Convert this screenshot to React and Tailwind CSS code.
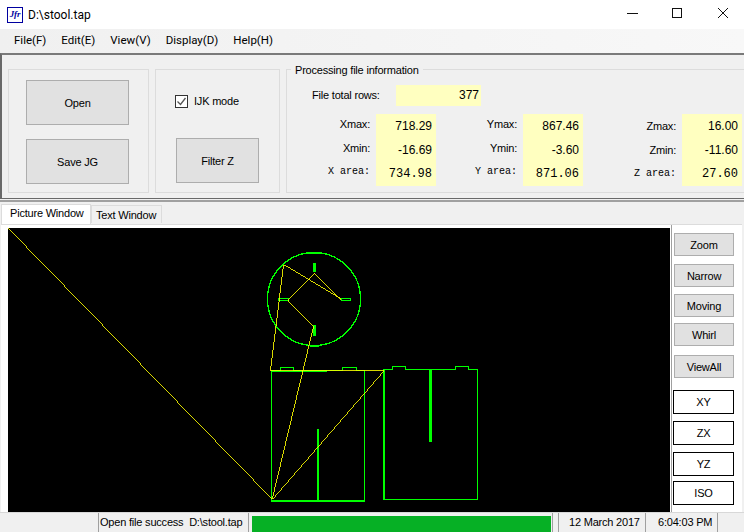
const MENUS = ['File(F)', 'Edit(E)', 'View(V)', 'Display(D)', 'Help(H)'];

const STATS = [
  { axis: 'X', max: '718.29', min: '-16.69', area: '734.98', cls: 'w-[83px]', lift: true },
  { axis: 'Y', max: '867.46', min: '-3.60', area: '871.06', cls: 'w-[79px]', lift: true },
  { axis: 'Z', max: '16.00', min: '-11.60', area: '27.60', cls: 'w-[91px]', lift: false },
];

const VIEW_TOOLS = [
  { label: 'Zoom', cls: 'h-[23px]' },
  { label: 'Narrow', cls: 'h-[23px] mt-[8px]' },
  { label: 'Moving', cls: 'h-[23px] mt-[7px]' },
  { label: 'Whirl', cls: 'h-[23px] mt-[6px]' },
  { label: 'ViewAll', cls: 'h-[23px] mt-[9px]' },
];

const VIEW_PLANES = [
  { label: 'XY', cls: 'mt-[12px]' },
  { label: 'ZX', cls: 'mt-[7px]' },
  { label: 'YZ', cls: 'mt-[7px]' },
  { label: 'ISO', cls: 'mt-[5px]' },
];

const GrayButton = ({ children, className }) => (
  <button className={`flex items-center justify-center pt-[2px] bg-[#e1e1e1] border border-[#adadad] text-black ${className}`}>
    {children}
  </button>
);

const StatColumn = ({ axis, max, min, area, cls, lift }) => (
  <div className="flex gap-[6px]">
    <div className={`flex flex-col items-end ${cls} ${lift ? '' : 'pt-[2px]'}`}>
      <span className="h-6 leading-[20px]">{axis}max:</span>
      <span className="h-6 leading-[20px]">{axis}min:</span>
      <span className="h-6 leading-[20px] tracking-normal font-['Liberation_Mono',monospace] text-[10px]">{axis} area:</span>
    </div>
    <div className="w-[60px] h-[72px] bg-[#ffffc0] flex flex-col items-end pr-[4px] text-[12px] tracking-normal">
      <span className="h-6 leading-6">{max}</span>
      <span className="h-6 leading-6">{min}</span>
      <span className="h-6 leading-6 font-['Liberation_Mono',monospace]">{area}</span>
    </div>
  </div>
);

// Toolpath preview, page coordinates via the viewBox
const Toolpath = () => (
  <svg viewBox="8 228 663 284" className="w-[663px] h-[284px] block" shapeRendering="crispEdges" fill="none">
    <g stroke="#00ff00" strokeWidth="1">
      <circle cx="314" cy="299" r="46.5" strokeWidth="1.3" />
      <path d="M271.5 371V500.5M364.5 371V500.5" />
      <path d="M271 370.5H280.5V367.5H293.5V370.5H342.5V367.5H356.5V370.5H364.5" />
      <path d="M341.5 298.5H350.5V300.5H341.5ZM278.5 298.5H288.5V300.5H278.5Z" />
      <path d="M385 369.5H392.5V366.5H405.5V369.5H455.5V366.5H468.5V369.5H477.5V499.5H384" />
    </g>
    <g fill="#00ff00">
      <rect x="310" y="252" width="9" height="2" />
      <rect x="310" y="345" width="9" height="2" />
      <rect x="313" y="263" width="3" height="9" />
      <rect x="313" y="325" width="3" height="11" />
      <rect x="271" y="500" width="94" height="2" />
      <rect x="271" y="371" width="56" height="1" />
      <rect x="317" y="429" width="2" height="73" />
      <rect x="383" y="369" width="2" height="131" />
      <rect x="429" y="369" width="3" height="73" />
    </g>
    <path stroke="#ffff00" strokeWidth="0.85" d="M8 228L272 499L383.5 370.5H270.5L283.5 265L341 299.5L314 272.5L288 299.5L313.5 325.5L272 499" />
  </svg>
);

export default function App() {
  return (
    <div className="w-[744px] h-[532px] overflow-hidden flex flex-col bg-[#f0f0f0] text-black text-[11px] tracking-[-0.2px] font-['Liberation_Sans',sans-serif]">
      {/* Title bar */}
      <div className="h-[29px] bg-white flex items-center shrink-0">
        <div className="ml-[7px] w-[16px] h-[16px] border border-[#0000a0] flex items-center justify-center text-[9px] leading-none italic font-bold text-[#0000a0] font-['Liberation_Serif',serif]">
          Jfr
        </div>
        <span className="ml-[5px] text-[12px] tracking-normal font-['Roboto',sans-serif]">D:\stool.tap</span>
        <div className="ml-auto flex">
          <svg width="118" height="29" viewBox="626 0 118 29" fill="none" stroke="#111" strokeWidth="1" shapeRendering="crispEdges">
            <path d="M627 13.5H638" />
            <rect x="672.5" y="8.5" width="9" height="9" />
            <path d="M718 8L728 18M728 8L718 18" shapeRendering="auto" />
          </svg>
        </div>
      </div>

      {/* Menu bar */}
      <div className="h-[24px] shrink-0 flex items-center pl-[14px] gap-[15px] text-[11.5px] tracking-normal bg-gradient-to-r from-[#f0f0f0] to-[#f8f8f8] font-['Roboto',sans-serif]">
        {MENUS.map((m) => (
          <span key={m}>{m}</span>
        ))}
      </div>

      {/* Control panel */}
      <div className="h-[146px] shrink-0 flex gap-[6px] pl-[6px] pt-[14px] border-t-2 border-l-2 border-b border-t-[#7a7a7a] border-l-[#696969] border-b-[#696969]">
        <div className="w-[141px] h-[124px] border border-[#dcdcdc] flex flex-col items-center gap-[14px] pt-[10px] pr-[2px]">
          <GrayButton className="w-[103px] h-[45px]">Open</GrayButton>
          <GrayButton className="w-[103px] h-[45px]">Save JG</GrayButton>
        </div>
        <div className="w-[125px] h-[124px] border border-[#dcdcdc] flex flex-col">
          <label className="flex items-center gap-[6px] ml-[19px] mt-[23px] mb-[1px]">
            <span className="w-[13px] h-[13px] border border-[#333] bg-white flex items-center justify-center">
              <svg width="11" height="11" viewBox="0 0 11 11" fill="none" stroke="#555" strokeWidth="1.3">
                <path d="M1.5 5.5L4.5 8.5L9.5 2" />
              </svg>
            </span>
            IJK mode
          </label>
          <GrayButton className="w-[83px] h-[45px] ml-[20px] mt-[27px]">Filter Z</GrayButton>
        </div>
        <div className="relative w-[458px] h-[124px] border border-[#dcdcdc] border-r-0">
          <span className="absolute left-[4px] -top-[7px] px-[4px] bg-[#f0f0f0] leading-[14px]">
            Processing file information
          </span>
          <div className="flex items-center ml-[25px] mt-[15px] h-[21px]">
            <span className="w-[84px]">File total rows:</span>
            <span className="w-[85px] h-[21px] leading-[21px] bg-[#ffffc0] text-right pr-[2px] text-[12px] tracking-normal">377</span>
          </div>
          <div className="flex mt-[8px] gap-[2px]">
            {STATS.map((s) => (
              <StatColumn key={s.axis} {...s} />
            ))}
          </div>
        </div>
      </div>

      {/* Double rule under the panel */}
      <div className="h-[3px] shrink-0 border-b-2 border-b-[#a0a0a0] bg-[#f0f0f0]" />

      {/* Tabs */}
      <div className="h-[22px] shrink-0 flex items-end pl-[1px] whitespace-nowrap">
        <div className="w-[90px] h-[20px] bg-white border border-b-0 border-[#dcdcdc] pl-[8px] leading-[17px]">Picture Window</div>
        <div className="w-[71px] h-[18px] border border-b-0 border-[#dcdcdc] pl-[4px] leading-[18px] mb-[1px]">Text Window</div>
      </div>

      {/* Tab page */}
      <div className="flex-1 min-h-0 flex ml-[1px] mr-[2px] bg-white border-t border-[#dcdcdc] pl-[7px] pt-[3px]">
        <div className="w-[662px] h-[284px] bg-black shrink-0 overflow-hidden">
          <Toolpath />
        </div>
        <div className="ml-[1px] -mt-[3px] border-l border-[#a0a0a0] pl-[1px] flex flex-col w-[64px]">
          <div className="flex flex-col pt-[8px]">
            {VIEW_TOOLS.map((t) => (
              <GrayButton key={t.label} className={`w-[60px] ml-[1px] ${t.cls}`}>{t.label}</GrayButton>
            ))}
            {VIEW_PLANES.map((p) => (
              <button key={p.label} className={`w-[61px] h-[24px] bg-white border border-black flex items-center justify-center ${p.cls}`}>
                {p.label}
              </button>
            ))}
          </div>
        </div>
      </div>

      {/* Status bar */}
      <div className="h-[20px] shrink-0 flex items-stretch border-t border-[#d8d8d8]">
        <div className="w-[99px] border-r border-[#a0a0a0] shrink-0" />
        <div className="w-[150px] border-r border-[#a0a0a0] pl-[1px] leading-[19px] whitespace-nowrap shrink-0">
          Open file success&nbsp; D:\stool.tap
        </div>
        <div className="w-[304px] shrink-0 pl-[3px] pt-[3px] border-r border-[#a0a0a0]">
          <div className="w-[299px] h-[16px] bg-[#06b025]" />
        </div>
        <div className="w-[88px] ml-[5px] border-l border-r border-[#a0a0a0] pl-[10px] leading-[19px] whitespace-nowrap shrink-0">12 March 2017</div>
        <div className="w-[72px] border-r border-[#a0a0a0] pl-[12px] leading-[19px] whitespace-nowrap shrink-0">6:04:03 PM</div>
      </div>
    </div>
  );
}
